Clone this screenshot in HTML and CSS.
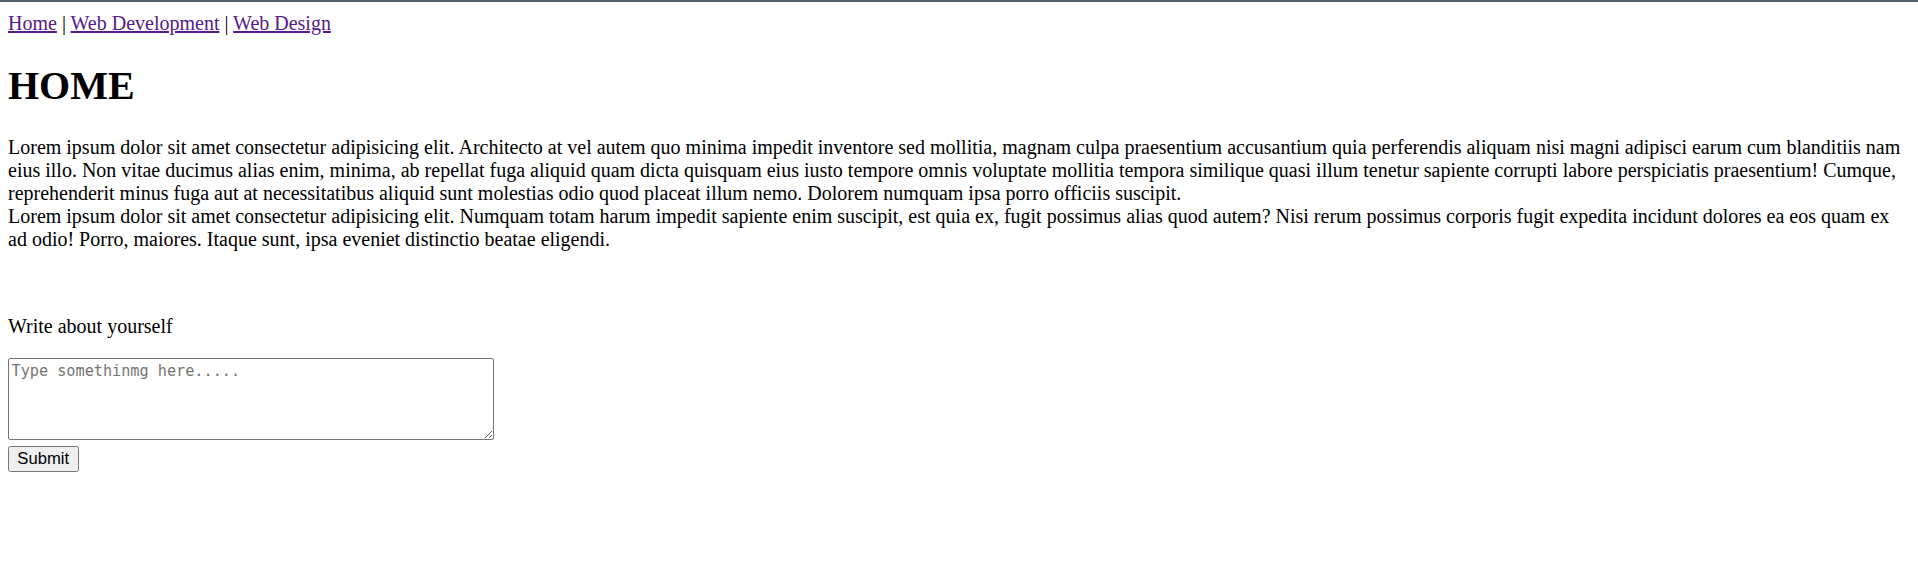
FILE: index.html
```html
<!DOCTYPE html>
<html lang="en">
<head>
<meta charset="utf-8">
<title>Home</title>
<link rel="stylesheet" href="styles.css">
</head>
<body>
<div class="topbar"></div>
<div class="page">
  <nav class="nav"><a href="#">Home</a> | <a href="#">Web Development</a> | <a href="#">Web Design</a></nav>
  <h1 class="title">HOME</h1>
  <p class="text">Lorem ipsum dolor sit amet consectetur adipisicing elit. Architecto at vel autem quo minima impedit inventore sed mollitia, magnam culpa praesentium accusantium quia perferendis aliquam nisi magni adipisci earum cum blanditiis nam eius illo. Non vitae ducimus alias enim, minima, ab repellat fuga aliquid quam dicta quisquam eius iusto tempore omnis voluptate mollitia tempora similique quasi illum tenetur sapiente corrupti labore perspiciatis praesentium! Cumque, reprehenderit minus fuga aut at necessitatibus aliquid sunt molestias odio quod placeat illum nemo. Dolorem numquam ipsa porro officiis suscipit.<br>Lorem ipsum dolor sit amet consectetur adipisicing elit. Numquam totam harum impedit sapiente enim suscipit, est quia ex, fugit possimus alias quod autem? Nisi rerum possimus corporis fugit expedita incidunt dolores ea eos quam ex ad odio! Porro, maiores. Itaque sunt, ipsa eveniet distinctio beatae eligendi.</p>
  <br>
  <form class="form">
    <p class="label">Write about yourself</p>
    <textarea class="area" placeholder="Type somethinmg here....."></textarea>
    <button class="btn" type="button">Submit</button>
  </form>
</div>
</body>
</html>
```
FILE: styles.css
```css
html, body {
  margin: 0;
  padding: 0;
  background: #ffffff;
}
body {
  font-family: "Liberation Serif", "Times New Roman", serif;
  font-size: 20px;
  color: #000;
}
.topbar {
  height: 2px;
  background: #4f5e65;
}
.page {
  padding: 10px 8px;
}
.nav a {
  color: #551a8b;
  text-decoration: underline;
}
.title {
  font-size: 40px;
  font-weight: bold;
  margin: 26.8px 0;
}
.text {
  margin: 20px 0;
}
.form {
  display: flex;
  flex-direction: column;
  align-items: flex-start;
  padding-top: 1.5px;
}
.label {
  margin: 20px 0;
}
.area {
  box-sizing: border-box;
  width: 486px;
  height: 82px;
  margin: 0 0 6px 0;
  padding: 2.5px;
  border: 1.25px solid #767676;
  border-radius: 2px;
  font-family: "DejaVu Sans Mono", "Liberation Mono", monospace;
  font-size: 15.2px;
  background: #fff;
}
.area::placeholder {
  color: #757575;
}
.btn {
  box-sizing: border-box;
  width: 70.5px;
  height: 25.5px;
  padding: 1px 0;
  border: 1.25px solid #767676;
  border-radius: 2.5px;
  background: #efefef;
  color: #000;
  font-family: "Liberation Sans", Arial, sans-serif;
  font-size: 16.67px;
  line-height: normal;
  text-align: center;
}
```
